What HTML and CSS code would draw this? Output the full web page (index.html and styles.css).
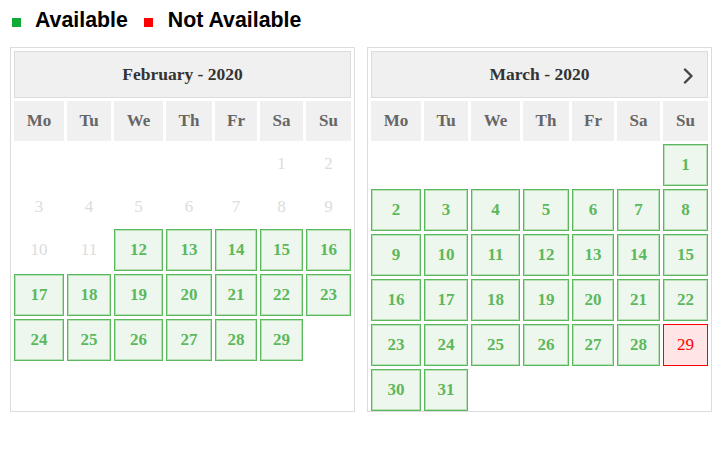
FILE: index.html
```html
<!DOCTYPE html>
<html>
<head>
<meta charset="utf-8">
<link rel="stylesheet" href="styles.css">
</head>
<body>
<div class="page">
  <div class="legend">
    <span class="sq sq-green"></span><span class="lbl">Available</span>
    <span class="sq sq-red"></span><span class="lbl">Not Available</span>
  </div>
  <div class="cals">
    <div class="cal">
      <div class="cal-head"><span class="title">February - 2020</span></div>
      <div class="grid grid-short">
        <div class="dn">Mo</div><div class="dn">Tu</div><div class="dn">We</div><div class="dn">Th</div><div class="dn">Fr</div><div class="dn">Sa</div><div class="dn">Su</div>
        <div></div><div></div><div></div><div></div><div></div><div class="d off">1</div><div class="d off">2</div>
        <div class="d off">3</div><div class="d off">4</div><div class="d off">5</div><div class="d off">6</div><div class="d off">7</div><div class="d off">8</div><div class="d off">9</div>
        <div class="d off">10</div><div class="d off">11</div><div class="d av">12</div><div class="d av">13</div><div class="d av">14</div><div class="d av">15</div><div class="d av">16</div>
        <div class="d av">17</div><div class="d av">18</div><div class="d av">19</div><div class="d av">20</div><div class="d av">21</div><div class="d av">22</div><div class="d av">23</div>
        <div class="d av">24</div><div class="d av">25</div><div class="d av">26</div><div class="d av">27</div><div class="d av">28</div><div class="d av">29</div><div></div>
      </div>
    </div>
    <div class="cal">
      <div class="cal-head"><span class="title">March - 2020</span>
        <svg class="next" width="12" height="16" viewBox="0 0 12 16"><polyline points="3,1.5 9.5,8 3,14.5" fill="none" stroke="#444" stroke-width="2.4" stroke-linecap="round" stroke-linejoin="round"/></svg>
      </div>
      <div class="grid">
        <div class="dn">Mo</div><div class="dn">Tu</div><div class="dn">We</div><div class="dn">Th</div><div class="dn">Fr</div><div class="dn">Sa</div><div class="dn">Su</div>
        <div></div><div></div><div></div><div></div><div></div><div></div><div class="d av">1</div>
        <div class="d av">2</div><div class="d av">3</div><div class="d av">4</div><div class="d av">5</div><div class="d av">6</div><div class="d av">7</div><div class="d av">8</div>
        <div class="d av">9</div><div class="d av">10</div><div class="d av">11</div><div class="d av">12</div><div class="d av">13</div><div class="d av">14</div><div class="d av">15</div>
        <div class="d av">16</div><div class="d av">17</div><div class="d av">18</div><div class="d av">19</div><div class="d av">20</div><div class="d av">21</div><div class="d av">22</div>
        <div class="d av">23</div><div class="d av">24</div><div class="d av">25</div><div class="d av">26</div><div class="d av">27</div><div class="d av">28</div><div class="d na">29</div>
        <div class="d av">30</div><div class="d av">31</div><div></div><div></div><div></div><div></div><div></div>
      </div>
    </div>
  </div>
</div>
</body>
</html>
```

FILE: styles.css
```css
html, body {
  margin: 0;
  padding: 0;
  background: #fff;
}
.page {
  padding: 8px 0 0 10px;
}
.legend {
  font-family: "Liberation Sans", Arial, sans-serif;
  font-weight: bold;
  font-size: 21.33px;
  line-height: 24px;
  color: #000;
  padding-left: 2px;
  white-space: nowrap;
}
.sq {
  display: inline-block;
  width: 9px;
  height: 9px;
  margin-right: 14px;
  vertical-align: baseline;
}
.sq-green { background: #10aa35; }
.sq-red { background: #ff0000; margin-left: 10px; margin-right: 15px; }
.cals {
  display: flex;
  gap: 12px;
  margin-top: 15px;
}
.cal {
  box-sizing: border-box;
  width: 345px;
  height: 365px;
  border: 1px solid #dcdcdc;
  padding: 3px;
  overflow: hidden;
  font-family: "Liberation Serif", "Times New Roman", serif;
}
.cal-head {
  position: relative;
  box-sizing: border-box;
  height: 47px;
  background: #f0f0f0;
  border: 1px solid #dcdcdc;
  display: flex;
  align-items: center;
  justify-content: center;
  margin-bottom: 3px;
}
.title {
  font-weight: bold;
  font-size: 17.5px;
  color: #333;
}
.next {
  position: absolute;
  right: 13px;
  top: 16px;
}
.grid {
  display: grid;
  grid-template-columns: 50px 44px 49px 46px 42px 43px 45px;
  grid-template-rows: 40px;
  grid-auto-rows: 42px;
  gap: 3px;
}
.grid-short {
  grid-template-rows: 40px 40px 39px;
}
.dn {
  background: #f0f0f0;
  color: #666;
  font-weight: bold;
  font-size: 17px;
  display: flex;
  align-items: center;
  justify-content: center;
}
.d {
  box-sizing: border-box;
  display: flex;
  align-items: center;
  justify-content: center;
  font-size: 17px;
}
.off {
  color: #dcdcdc;
}
.av {
  border: 1px solid #5cb85c;
  box-shadow: inset 0 0 0 1px #b8e0b8;
  background: #eef7ee;
  color: #5cb85c;
  font-weight: bold;
}
.na {
  border: 1px solid #ff0000;
  background: #ffe5e5;
  color: #ff0000;
}
```
